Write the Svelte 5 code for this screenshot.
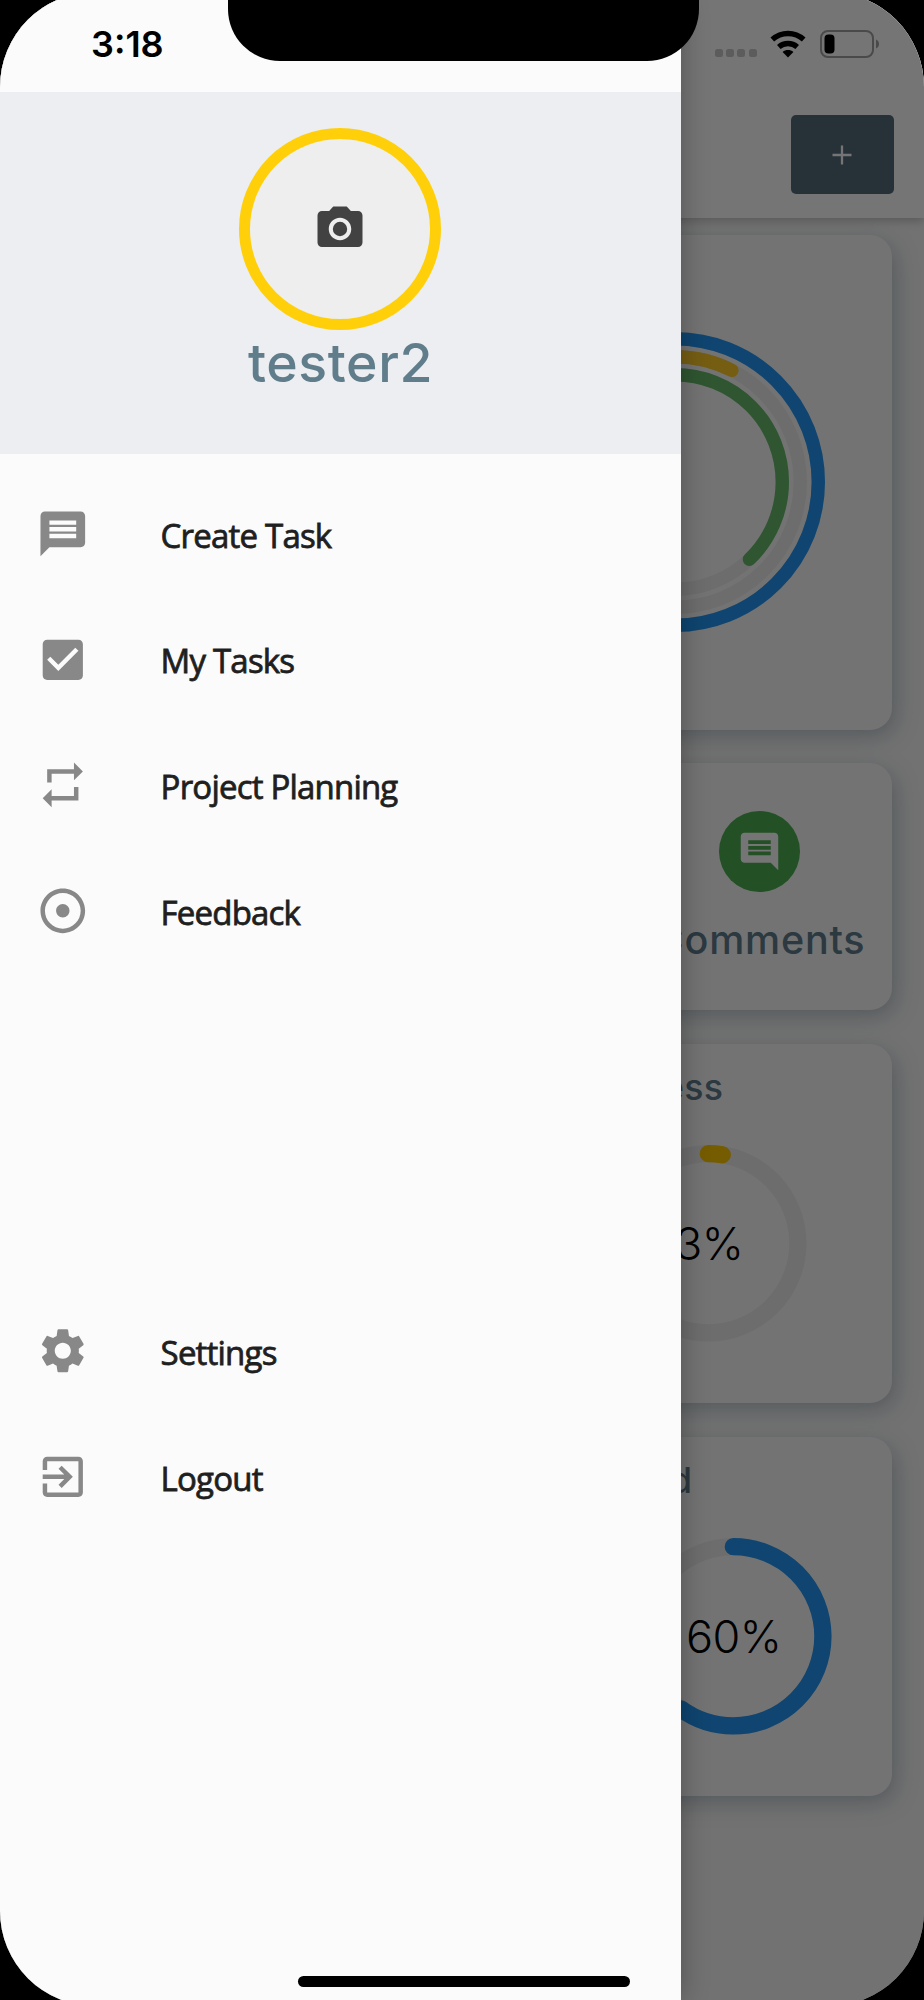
<script>
  const icons = {
    message:
      "M20 2H4c-1.1 0-1.99.9-1.99 2L2 22l4-4h14c1.1 0 2-.9 2-2V4c0-1.1-.9-2-2-2zm-2 12H6v-2h12v2zm0-3H6V9h12v2zm0-3H6V6h12v2z",
    checkBox:
      "M19 3H5c-1.11 0-2 .9-2 2v14c0 1.1.89 2 2 2h14c1.11 0 2-.9 2-2V5c0-1.1-.89-2-2-2zm-9 14l-5-5 1.41-1.41L10 14.17l7.59-7.59L19 8l-9 9z",
    repeat:
      "M7 7h10v3l4-4-4-4v3H5v6h2V7zm10 10H7v-3l-4 4 4 4v-3h12v-6h-2v4z",
    adjust:
      "M12 2C6.49 2 2 6.49 2 12s4.49 10 10 10 10-4.49 10-10S17.51 2 12 2zm0 18c-4.41 0-8-3.59-8-8s3.59-8 8-8 8 3.59 8 8-3.59 8-8 8zm3-8c0 1.66-1.34 3-3 3s-3-1.34-3-3 1.34-3 3-3 3 1.34 3 3z",
    settings:
      "M19.14 12.94c.04-.3.06-.61.06-.94 0-.32-.02-.64-.07-.94l2.03-1.58c.18-.14.23-.41.12-.61l-1.92-3.32c-.12-.22-.37-.29-.59-.22l-2.39.96c-.5-.38-1.03-.7-1.62-.94l-.36-2.54c-.04-.24-.24-.41-.48-.41h-3.84c-.24 0-.43.17-.47.41l-.36 2.54c-.59.24-1.13.57-1.62.94l-2.39-.96c-.22-.08-.47 0-.59.22L2.74 8.87c-.12.21-.08.47.12.61l2.03 1.58c-.05.3-.09.63-.09.94s.02.64.07.94l-2.03 1.58c-.18.14-.23.41-.12.61l1.92 3.32c.12.22.37.29.59.22l2.39-.96c.5.38 1.03.7 1.62.94l.36 2.54c.05.24.24.41.48.41h3.84c.24 0 .44-.17.47-.41l.36-2.54c.59-.24 1.13-.56 1.62-.94l2.39.96c.22.08.47 0 .59-.22l1.92-3.32c.12-.22.07-.47-.12-.61l-2.01-1.58zM12 15.6c-1.98 0-3.6-1.62-3.6-3.6s1.62-3.6 3.6-3.6 3.6 1.62 3.6 3.6-1.62 3.6-3.6 3.6z",
    exit:
      "M10.09 15.59L11.5 17l5-5-5-5-1.41 1.41L12.67 11H3v2h9.67l-2.58 2.59zM19 3H5c-1.11 0-2 .9-2 2v4h2V5h14v14H5v-4H3v4c0 1.1.89 2 2 2h14c1.1 0 2-.9 2-2V5c0-1.1-.9-2-2-2z",
    comment:
      "M21.99 4c0-1.1-.89-2-1.99-2H4c-1.1 0-2 .9-2 2v12c0 1.1.9 2 2 2h14l4 4-.01-18zM18 14H6v-2h12v2zm0-3H6V9h12v2zm0-3H6V6h12v2z",
  };

  const mainLinks = [
    { label: "Create Task", icon: icons.message },
    { label: "My Tasks", icon: icons.checkBox },
    { label: "Project Planning", icon: icons.repeat },
    { label: "Feedback", icon: icons.adjust },
  ];

  const accountLinks = [
    { label: "Settings", icon: icons.settings },
    { label: "Logout", icon: icons.exit },
  ];

  const summary = [
    { r: 143.3, color: "#2196f3", value: 100 },
    { r: 125.3, color: "#ffca28", value: 7.5 },
    { r: 107.3, color: "#66bb6a", value: 37.8 },
  ];

  const progress = [
    { title: "In Progress", text: "3%", value: 2.5, color: "#ffc800", name: "doing" },
    { title: "Completed", text: "60%", value: 60, color: "#2196f3", name: "done" },
  ];

  let open = true;
</script>

<div class="device">
  <div class="screen">
    <div class="dashboard">
      <header class="appbar">
        <button class="add" aria-label="Add">
          <svg viewBox="0 0 20 20"><path d="M10 .5v19M.5 10h19" /></svg>
        </button>
      </header>

      <div class="cards">
        <section class="card summary">
          <svg class="rings" viewBox="-150 -150 300 300">
            {#each summary as ring}
              <circle class="track" r={ring.r} />
              <circle
                class="arc"
                r={ring.r}
                stroke={ring.color}
                pathLength="100"
                stroke-dasharray="{ring.value} 100"
                transform="rotate(-90)"
              />
            {/each}
          </svg>
        </section>

        <div class="shortcuts">
          <section class="card"></section>
          <section class="card"></section>
          <section class="card shortcut">
            <span class="bubble">
              <svg viewBox="0 0 24 24"><path d={icons.comment} /></svg>
            </span>
            <span class="shortcut-label">Comments</span>
          </section>
        </div>

        {#each progress as item}
          <section class="card progress {item.name}">
            <h2>{item.title}</h2>
            <div class="gauge">
              <svg viewBox="-98.3 -98.3 196.6 196.6">
                <circle class="track" r="89.6" />
                <circle
                  class="arc"
                  r="89.6"
                  stroke={item.color}
                  pathLength="100"
                  stroke-dasharray="{item.value} 100"
                  transform="rotate(-90)"
                />
              </svg>
              <span>{item.text}</span>
            </div>
          </section>
        {/each}
      </div>
    </div>

    {#if open}
      <div class="scrim" on:click={() => (open = false)} role="presentation"></div>

      <aside class="drawer">
        <div class="profile">
          <div class="avatar">
            <svg viewBox="0 0 24 24">
              <circle cx="12" cy="12" r="3.2" />
              <path
                d="M9 2L7.17 4H4c-1.1 0-2 .9-2 2v12c0 1.1.9 2 2 2h16c1.1 0 2-.9 2-2V6c0-1.1-.9-2-2-2h-3.17L15 2H9zm3 15c-2.76 0-5-2.24-5-5s2.24-5 5-5 5 2.24 5 5-2.24 5-5 5z"
              />
            </svg>
          </div>
          <p class="username">tester2</p>
        </div>

        <nav class="links">
          {#each mainLinks as link}
            <div class="link">
              <svg viewBox="0 0 24 24"><path d={link.icon} /></svg>
              <span>{link.label}</span>
            </div>
          {/each}
        </nav>

        <nav class="links account">
          {#each accountLinks as link}
            <div class="link">
              <svg viewBox="0 0 24 24"><path d={link.icon} /></svg>
              <span>{link.label}</span>
            </div>
          {/each}
        </nav>
      </aside>
    {/if}

    <div class="statusbar">
      <span class="time">3:18</span>
      <div class="signals">
        <span class="dots"><i></i><i></i><i></i><i></i></span>
        <svg class="wifi" viewBox="0 0 36 28">
          <path d="M18 27.4l5.4-5.5c-3-2.6-7.8-2.6-10.8 0z" />
          <path d="M8.8 16.9c5.2-4.6 13.2-4.6 18.4 0" />
          <path d="M2.3 9.6c8.9-8.2 22.5-8.2 31.4 0" />
        </svg>
        <svg class="battery" viewBox="0 0 60 28">
          <rect class="shell" x="1" y="1" width="52" height="26" rx="7" />
          <rect x="4.5" y="4.5" width="10" height="19" rx="4" />
          <path class="tip" d="M56 9.5c4 1.5 4 7.5 0 9z" />
        </svg>
      </div>
    </div>
    <div class="notch"></div>
    <div class="home"></div>
  </div>
</div>

<style>
  :global(body) {
    background: #000;
  }

  .device {
    width: 924px;
    height: 2000px;
    overflow: hidden;
    background: #000;
    font-family: Inter, sans-serif;
  }

  .screen {
    position: relative;
    height: 2000px;
    clip-path: inset(-8px 0 -6px 0 round 95px);
  }

  .dashboard {
    height: 2000px;
    background: #f8f8f8;
  }

  .appbar {
    position: relative;
    box-sizing: border-box;
    display: flex;
    justify-content: flex-end;
    height: 218px;
    padding: 115px 30px 0 0;
    background: #fff;
    box-shadow: 0 3px 9px rgba(0, 0, 0, 0.22);
  }

  .add {
    display: flex;
    align-items: center;
    justify-content: center;
    width: 103px;
    height: 79px;
    padding: 0;
    border: 0;
    border-radius: 5px;
    background: #546e7a;
  }

  .add svg {
    width: 20px;
    height: 20px;
    margin-right: 1px;
    stroke: #fff;
    stroke-width: 2.3;
  }

  .cards {
    display: flex;
    flex-direction: column;
    gap: 33.5px;
    padding: 17px 32.5px 0 32px;
  }

  .card {
    box-sizing: border-box;
    border-radius: 22px;
    background: #fbfbfb;
    box-shadow: 4px 7px 22px rgba(84, 110, 130, 0.36);
  }

  .summary {
    display: flex;
    align-items: center;
    justify-content: flex-end;
    height: 494.5px;
    padding-right: 67px;
  }

  .rings {
    width: 300px;
    height: 300px;
  }

  .track {
    fill: none;
    stroke: #eee;
  }

  .arc {
    fill: none;
    stroke-linecap: round;
  }

  .rings circle {
    stroke-width: 13.4;
  }

  .shortcuts {
    display: grid;
    grid-template-columns: repeat(3, 1fr);
    gap: 34px;
    height: 247px;
  }

  .shortcut {
    display: flex;
    flex-direction: column;
    align-items: center;
    padding-top: 48px;
  }

  .bubble {
    display: flex;
    align-items: center;
    justify-content: center;
    width: 81px;
    height: 81px;
    border-radius: 50%;
    background: #4caf50;
  }

  .bubble svg {
    width: 45px;
    height: 45px;
    fill: #fff;
  }

  .shortcut-label {
    margin-top: 23px;
    padding-left: 1px;
    font-size: 39.5px;
    line-height: 50px;
    font-weight: 460;
    letter-spacing: 0.8px;
    color: #607d8b;
  }

  .progress {
    display: flex;
    flex-direction: column;
    align-items: flex-end;
    height: 359.5px;
    padding-top: 21px;
  }

  .progress h2 {
    margin: 0 168px 0 0;
    font-size: 35.7px;
    line-height: 44px;
    font-weight: 470;
    letter-spacing: 0.4px;
    color: #607d8b;
  }

  .gauge {
    display: grid;
    place-items: center;
    width: 196.6px;
    height: 196.6px;
    margin: 36.5px 84.5px 0 0;
  }

  .gauge svg,
  .gauge span {
    grid-area: 1 / 1;
  }

  .gauge svg {
    width: 100%;
    height: 100%;
  }

  .gauge circle {
    stroke-width: 17.3;
  }

  .gauge span {
    padding-left: 1px;
    font-size: 45px;
    font-weight: 300;
    letter-spacing: -0.5px;
    color: #000;
  }

  .done h2 {
    margin-right: 199px;
  }

  .done .gauge {
    margin-right: 60px;
  }

  .scrim {
    position: absolute;
    inset: 0;
    background: rgba(0, 0, 0, 0.54);
  }

  .drawer {
    position: absolute;
    top: 0;
    left: 0;
    box-sizing: border-box;
    width: 681px;
    height: 2000px;
    padding-top: 92px;
    background: #fbfbfb;
    box-shadow: 0 0 26px rgba(0, 0, 0, 0.3);
  }

  .profile {
    box-sizing: border-box;
    display: flex;
    flex-direction: column;
    align-items: center;
    height: 362px;
    padding: 36px 1px 0 0;
    background: #eceef2;
  }

  .avatar {
    box-sizing: border-box;
    display: flex;
    align-items: center;
    justify-content: center;
    width: 202px;
    height: 202px;
    border: 11.5px solid #ffd00a;
    border-radius: 50%;
    background: #eee;
  }

  .avatar svg {
    width: 54px;
    height: 54px;
    fill: #424242;
  }

  .username {
    margin: 0;
    padding-left: 1px;
    font-size: 53.6px;
    line-height: 66px;
    font-weight: 450;
    letter-spacing: 0.6px;
    color: #607d8b;
  }

  .links {
    padding-top: 17px;
  }

  .account {
    padding-top: 314.5px;
  }

  .link {
    display: flex;
    align-items: center;
    height: 125.7px;
    padding-left: 35.5px;
    font-family: "Open Sans", sans-serif;
    font-size: 33px;
    letter-spacing: -0.8px;
    color: #1f1f1f;
  }

  .link svg {
    width: 53.6px;
    height: 53.6px;
    margin-right: 71.5px;
    fill: #888;
  }

  .link span {
    padding-top: 2.5px;
    -webkit-text-stroke: 0.8px #1f1f1f;
  }

  .statusbar {
    position: absolute;
    top: 0;
    left: 0;
    box-sizing: border-box;
    display: flex;
    justify-content: space-between;
    width: 100%;
    padding: 22px 44.5px 0 91px;
  }

  .time {
    font-size: 36px;
    line-height: 44px;
    font-weight: 600;
    color: #000;
  }

  .signals {
    display: flex;
    padding-top: 8px;
  }

  .dots {
    display: flex;
    gap: 3.2px;
    margin: 19px 13px 0 0;
  }

  .dots i {
    width: 8px;
    height: 8px;
    border-radius: 2.5px;
    background: #5c5c5c;
  }

  .wifi {
    width: 36px;
    height: 28px;
    margin-right: 14px;
  }

  .wifi path + path {
    fill: none;
    stroke: #000;
    stroke-width: 5.4;
  }

  .battery {
    width: 60px;
    height: 28px;
  }

  .shell {
    fill: none;
    stroke: #4a4a4a;
    stroke-width: 2;
  }

  .tip {
    fill: #4a4a4a;
  }

  .notch {
    position: absolute;
    top: 0;
    left: 228px;
    width: 471px;
    height: 60.5px;
    border-radius: 0 0 52px 52px;
    background: #000;
  }

  .home {
    position: absolute;
    bottom: 13.5px;
    left: 297.5px;
    width: 332px;
    height: 11px;
    border-radius: 6px;
    background: #000;
  }
</style>
